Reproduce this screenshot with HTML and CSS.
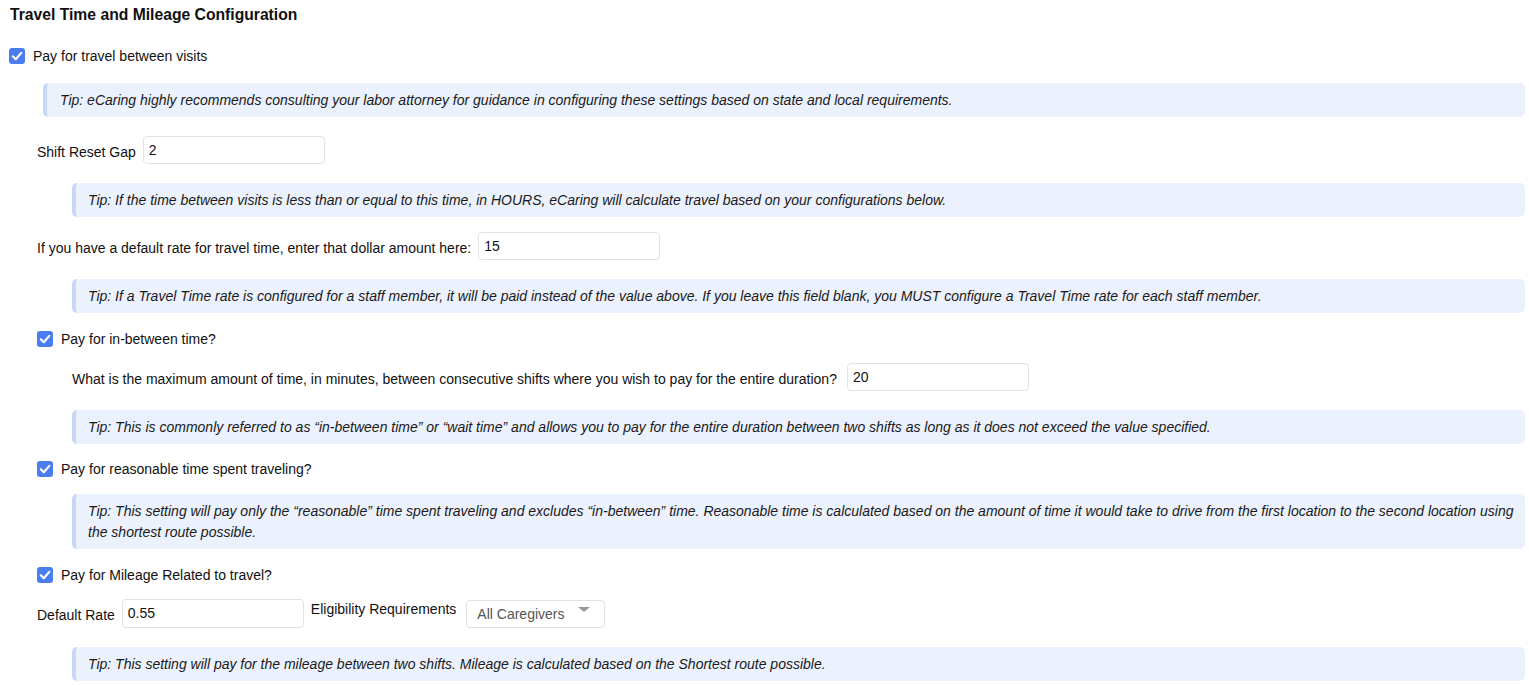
FILE: index.html
```html
<!DOCTYPE html>
<html lang="en">
<head>
  <meta charset="UTF-8">
  <title>Travel Time and Mileage Configuration</title>
  <link rel="stylesheet" href="styles.css">
</head>
<body>

<div class="config">
  <h3 class="titulo">Travel Time and Mileage Configuration</h3>

  <label class="check linha-1">
    <span class="caixa"><svg viewBox="0 0 16 16" width="16" height="16"><path d="M3.8 8.3 L6.8 11.2 L12.3 4.9" fill="none" stroke="#fff" stroke-width="2.2" stroke-linecap="round" stroke-linejoin="round"/></svg></span>
    Pay for travel between visits
  </label>

  <div class="grupo">
    <div class="dica dica-topo">Tip: eCaring highly recommends consulting your labor attorney for guidance in configuring these settings based on state and local requirements.</div>

    <div class="campo linha-2">
      <span class="rotulo">Shift Reset Gap</span>
      <input class="entrada" type="text" value="2">
    </div>
    <div class="dica">Tip: If the time between visits is less than or equal to this time, in HOURS, eCaring will calculate travel based on your configurations below.</div>

    <div class="campo linha-3">
      <span class="rotulo">If you have a default rate for travel time, enter that dollar amount here:</span>
      <input class="entrada" type="text" value="15">
    </div>
    <div class="dica">Tip: If a Travel Time rate is configured for a staff member, it will be paid instead of the value above. If you leave this field blank, you MUST configure a Travel Time rate for each staff member.</div>

    <label class="check linha-4">
      <span class="caixa"><svg viewBox="0 0 16 16" width="16" height="16"><path d="M3.8 8.3 L6.8 11.2 L12.3 4.9" fill="none" stroke="#fff" stroke-width="2.2" stroke-linecap="round" stroke-linejoin="round"/></svg></span>
      Pay for in-between time?
    </label>
    <div class="campo recuo linha-5">
      <span class="rotulo">What is the maximum amount of time, in minutes, between consecutive shifts where you wish to pay for the entire duration?</span>
      <input class="entrada" type="text" value="20">
    </div>
    <div class="dica">Tip: This is commonly referred to as “in-between time” or “wait time” and allows you to pay for the entire duration between two shifts as long as it does not exceed the value specified.</div>

    <label class="check linha-6">
      <span class="caixa"><svg viewBox="0 0 16 16" width="16" height="16"><path d="M3.8 8.3 L6.8 11.2 L12.3 4.9" fill="none" stroke="#fff" stroke-width="2.2" stroke-linecap="round" stroke-linejoin="round"/></svg></span>
      Pay for reasonable time spent traveling?
    </label>
    <div class="dica dica-6">Tip: This setting will pay only the “reasonable” time spent traveling and excludes “in-between” time. Reasonable time is calculated based on the amount of time it would take to drive from the first location to the second location using the shortest route possible.</div>

    <label class="check linha-7">
      <span class="caixa"><svg viewBox="0 0 16 16" width="16" height="16"><path d="M3.8 8.3 L6.8 11.2 L12.3 4.9" fill="none" stroke="#fff" stroke-width="2.2" stroke-linecap="round" stroke-linejoin="round"/></svg></span>
      Pay for Mileage Related to travel?
    </label>
    <div class="campo milhas linha-8">
      <span class="rotulo">Default Rate</span>
      <input class="entrada" type="text" value="0.55">
      <span class="rotulo rotulo-alto">Eligibility Requirements</span>
      <div class="seletor">
        <span>All Caregivers</span>
        <span class="seta"></span>
      </div>
    </div>
    <div class="dica">Tip: This setting will pay for the mileage between two shifts. Mileage is calculated based on the Shortest route possible.</div>
  </div>
</div>

</body>
</html>
```

FILE: styles.css
```css
body {
  margin: 0;
  font-family: "Liberation Sans", Arial, sans-serif;
  font-size: 14px;
  color: #111;
  background: white;
}

.config {
  padding: 5px 4px 0 10px;
}

.titulo {
  margin: 0;
  font-size: 15.7px;
  line-height: 20px;
  font-weight: bold;
}

.check {
  display: flex;
  align-items: center;
  gap: 8px;
  height: 20px;
  line-height: 20px;
  cursor: pointer;
}

.linha-1 {
  margin: 21px 0 0 -1px;
}

.check span.caixa + * {
  margin-top: -1px;
}

.caixa {
  width: 16px;
  height: 16px;
  border-radius: 3px;
  background: #4a7df0;
  display: flex;
}

.grupo {
  padding-left: 27px;
}

.dica {
  margin: 19px 0 0 35px;
  padding: 7px 8px 6px 12px;
  line-height: 21px;
  background: #ebf1fd;
  border-left: 4px solid #c8d6f8;
  border-radius: 5px;
  font-style: italic;
  color: #1a1a1a;
}

.dica-topo {
  margin: 17px 0 0 6px;
  padding-left: 13px;
}

.campo {
  display: flex;
  align-items: center;
  gap: 7px;
}

.recuo {
  padding-left: 35px;
}

.rotulo {
  line-height: 20px;
  padding-top: 3px;
}

.entrada {
  width: 182px;
  height: 28px;
  box-sizing: border-box;
  border: 1px solid #e2e2e2;
  border-radius: 4px;
  padding: 0 5px 1px;
  font-family: "Liberation Sans", Arial, sans-serif;
  font-size: 14px;
  color: #111;
  outline: none;
}

.linha-2 {
  margin-top: 19px;
}

.linha-3 {
  margin-top: 15px;
}

.linha-4 {
  margin-top: 16px;
}

.linha-5 {
  margin-top: 14px;
}

.linha-5 .rotulo {
  margin-right: 3px;
}

.linha-6 {
  margin-top: 15px;
}

.dica-6 {
  margin-top: 15px;
}

.linha-7 {
  margin-top: 16px;
}

.linha-8 {
  margin-top: 14px;
  align-items: flex-start;
}

.linha-8 .rotulo {
  padding-top: 6px;
}

.linha-8 .rotulo-alto {
  padding-top: 0;
}

.linha-8 .entrada {
  height: 29px;
}

.seletor {
  margin: 1px 0 0 3px;
  width: 139px;
  height: 28px;
  box-sizing: border-box;
  border: 1px solid #e2e2e2;
  border-radius: 4px;
  padding: 0 0 0 10px;
  display: flex;
  align-items: center;
  color: #555;
  font-size: 14px;
}

.seta {
  margin-left: 14px;
  margin-bottom: 10px;
  width: 0;
  height: 0;
  border-left: 6px solid transparent;
  border-right: 6px solid transparent;
  border-top: 5px solid #999;
}
```
